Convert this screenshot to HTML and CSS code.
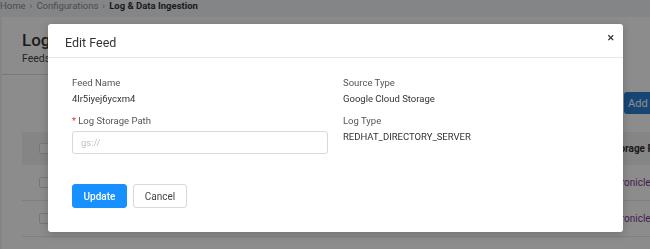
FILE: index.html
```html
<!DOCTYPE html>
<html lang="en">
<head>
    <meta charset="UTF-8">
    <meta name="viewport" content="width=device-width, initial-scale=1.0">
    <title>Log &amp; Data Ingestion</title>
    <link rel="stylesheet" href="styles.css">
</head>
<body>
    <div class="breadcrumb">
        <span>Home</span>
        <span class="sep">›</span>
        <span>Configurations</span>
        <span class="sep">›</span>
        <span class="current">Log &amp; Data Ingestion</span>
    </div>

    <div class="page">
        <div class="page-head">
            <h1>Log and Data Ingestion</h1>
            <p>Feeds</p>
        </div>
        <div class="toolbar">
            <button class="add-btn">Add</button>
        </div>
        <div class="table">
            <div class="row head">
                <span class="check"></span>
                <span class="cell-end">Storage Path</span>
            </div>
            <div class="row">
                <span class="check"></span>
                <span class="cell-end link">chronicle-logs</span>
            </div>
            <div class="row">
                <span class="check"></span>
                <span class="cell-end link">chronicle_data</span>
            </div>
        </div>
    </div>

    <div class="overlay"></div>

    <div class="modal">
        <div class="modal-header">
            <span class="modal-title">Edit Feed</span>
            <span class="close">&#x2715;</span>
        </div>
        <div class="modal-body">
            <div class="fields">
                <div class="field">
                    <div class="label">Feed Name</div>
                    <div class="value">4lr5iyej6ycxm4</div>
                </div>
                <div class="field">
                    <div class="label">Source Type</div>
                    <div class="value">Google Cloud Storage</div>
                </div>
                <div class="field">
                    <div class="label"><span class="req">*</span> Log Storage Path</div>
                    <input class="text-input" type="text" placeholder="gs://">
                </div>
                <div class="field">
                    <div class="label">Log Type</div>
                    <div class="value">REDHAT_DIRECTORY_SERVER</div>
                </div>
            </div>
            <div class="actions">
                <button class="btn primary">Update</button>
                <button class="btn">Cancel</button>
            </div>
        </div>
    </div>
</body>
</html>
```

FILE: styles.css
```css
body {
    margin: 0;
    font-family: Roboto, 'Liberation Sans', sans-serif;
    background-color: #f0f2f5;
    color: #333;
    overflow: hidden;
    width: 650px;
    height: 249px;
}
.breadcrumb {
    height: 13px;
    font-size: 9.5px;
    line-height: 12px;
    color: #8c8c8c;
    display: flex;
    gap: 4px;
}
.breadcrumb .sep {
    color: #999;
}
.breadcrumb .current {
    color: #333;
    font-weight: 700;
}
.page {
    margin: 4px 0 0 2px;
    background-color: #fff;
    height: 240px;
    overflow: hidden;
}
.page-head {
    padding: 13px 0 8px 20px;
    border-bottom: 1px solid #ddd;
    margin-right: 580px;
}
.page-head h1 {
    margin: 0;
    font-size: 17px;
    line-height: 20px;
    font-weight: 500;
    white-space: nowrap;
}
.page-head p {
    margin: 2px 0 0;
    font-size: 10.5px;
    line-height: 14px;
    color: #444;
}
.toolbar {
    display: flex;
    justify-content: flex-end;
    padding-top: 17px;
    height: 22px;
    margin-bottom: 18px;
}
.add-btn {
    background-color: #2b7fd4;
    color: #fff;
    border: none;
    height: 22px;
    width: 26px;
    padding: 0 0 0 4px;
    text-align: left;
    font-family: inherit;
    font-size: 11px;
    border-radius: 3px 0 0 3px;
}
.table {
    margin-left: 20px;
}
.row {
    display: flex;
    align-items: center;
    justify-content: space-between;
    height: 35px;
    border-bottom: 1px solid #e8e8e8;
    font-size: 10px;
}
.row.head {
    height: 33px;
    background-color: #f2f2f2;
    border-bottom: none;
    font-weight: 700;
}
.check {
    width: 9px;
    height: 9px;
    margin-left: 17px;
    border: 1px solid #d9d9d9;
    background-color: #fff;
    border-radius: 2px;
}
.cell-end {
    width: 40px;
    overflow: hidden;
    white-space: nowrap;
    color: #333;
}
.cell-end.link {
    color: #7a3b8f;
}
.overlay {
    position: fixed;
    inset: 0;
    background-color: rgba(0, 0, 0, 0.45);
}
.modal {
    position: absolute;
    left: 48px;
    top: 24px;
    width: 575px;
    height: 208px;
    background-color: #fff;
    border-radius: 3px;
    box-shadow: 0 2px 8px rgba(0, 0, 0, 0.2);
}
.modal-header {
    height: 33px;
    border-bottom: 1px solid #e8e8e8;
    display: flex;
    align-items: center;
    justify-content: space-between;
    padding: 0 8px 0 17px;
}
.modal-title {
    font-size: 12.5px;
    color: #333;
    margin-top: 4px;
}
.close {
    font-size: 9px;
    font-weight: 700;
    color: #333;
    margin-top: -6px;
}
.modal-body {
    padding: 18px 24px 25px 24px;
}
.fields {
    display: grid;
    grid-template-columns: 271px 1fr;
    row-gap: 8px;
}
.label {
    font-size: 9.5px;
    line-height: 14px;
    color: #555;
}
.req {
    color: #f5222d;
    font-size: 9px;
}
.value {
    font-size: 9.5px;
    line-height: 15px;
    color: #333;
    margin-top: 1px;
}
.text-input {
    display: block;
    box-sizing: border-box;
    width: 256px;
    height: 23px;
    margin-top: 3px;
    border: 1px solid #d9d9d9;
    border-radius: 3px;
    padding: 0 8px;
    font-family: inherit;
    font-size: 9.5px;
    color: #333;
}
.text-input::placeholder {
    color: #bfbfbf;
}
.actions {
    display: flex;
    gap: 6px;
    margin-top: 30px;
}
.btn {
    height: 24px;
    width: 54px;
    border: 1px solid #d9d9d9;
    border-radius: 3px;
    background-color: #fff;
    color: #444;
    font-family: inherit;
    font-size: 10px;
    padding: 0;
}
.btn.primary {
    width: 55px;
    background-color: #1890ff;
    border-color: #1890ff;
    color: #fff;
    font-weight: 500;
}
```
